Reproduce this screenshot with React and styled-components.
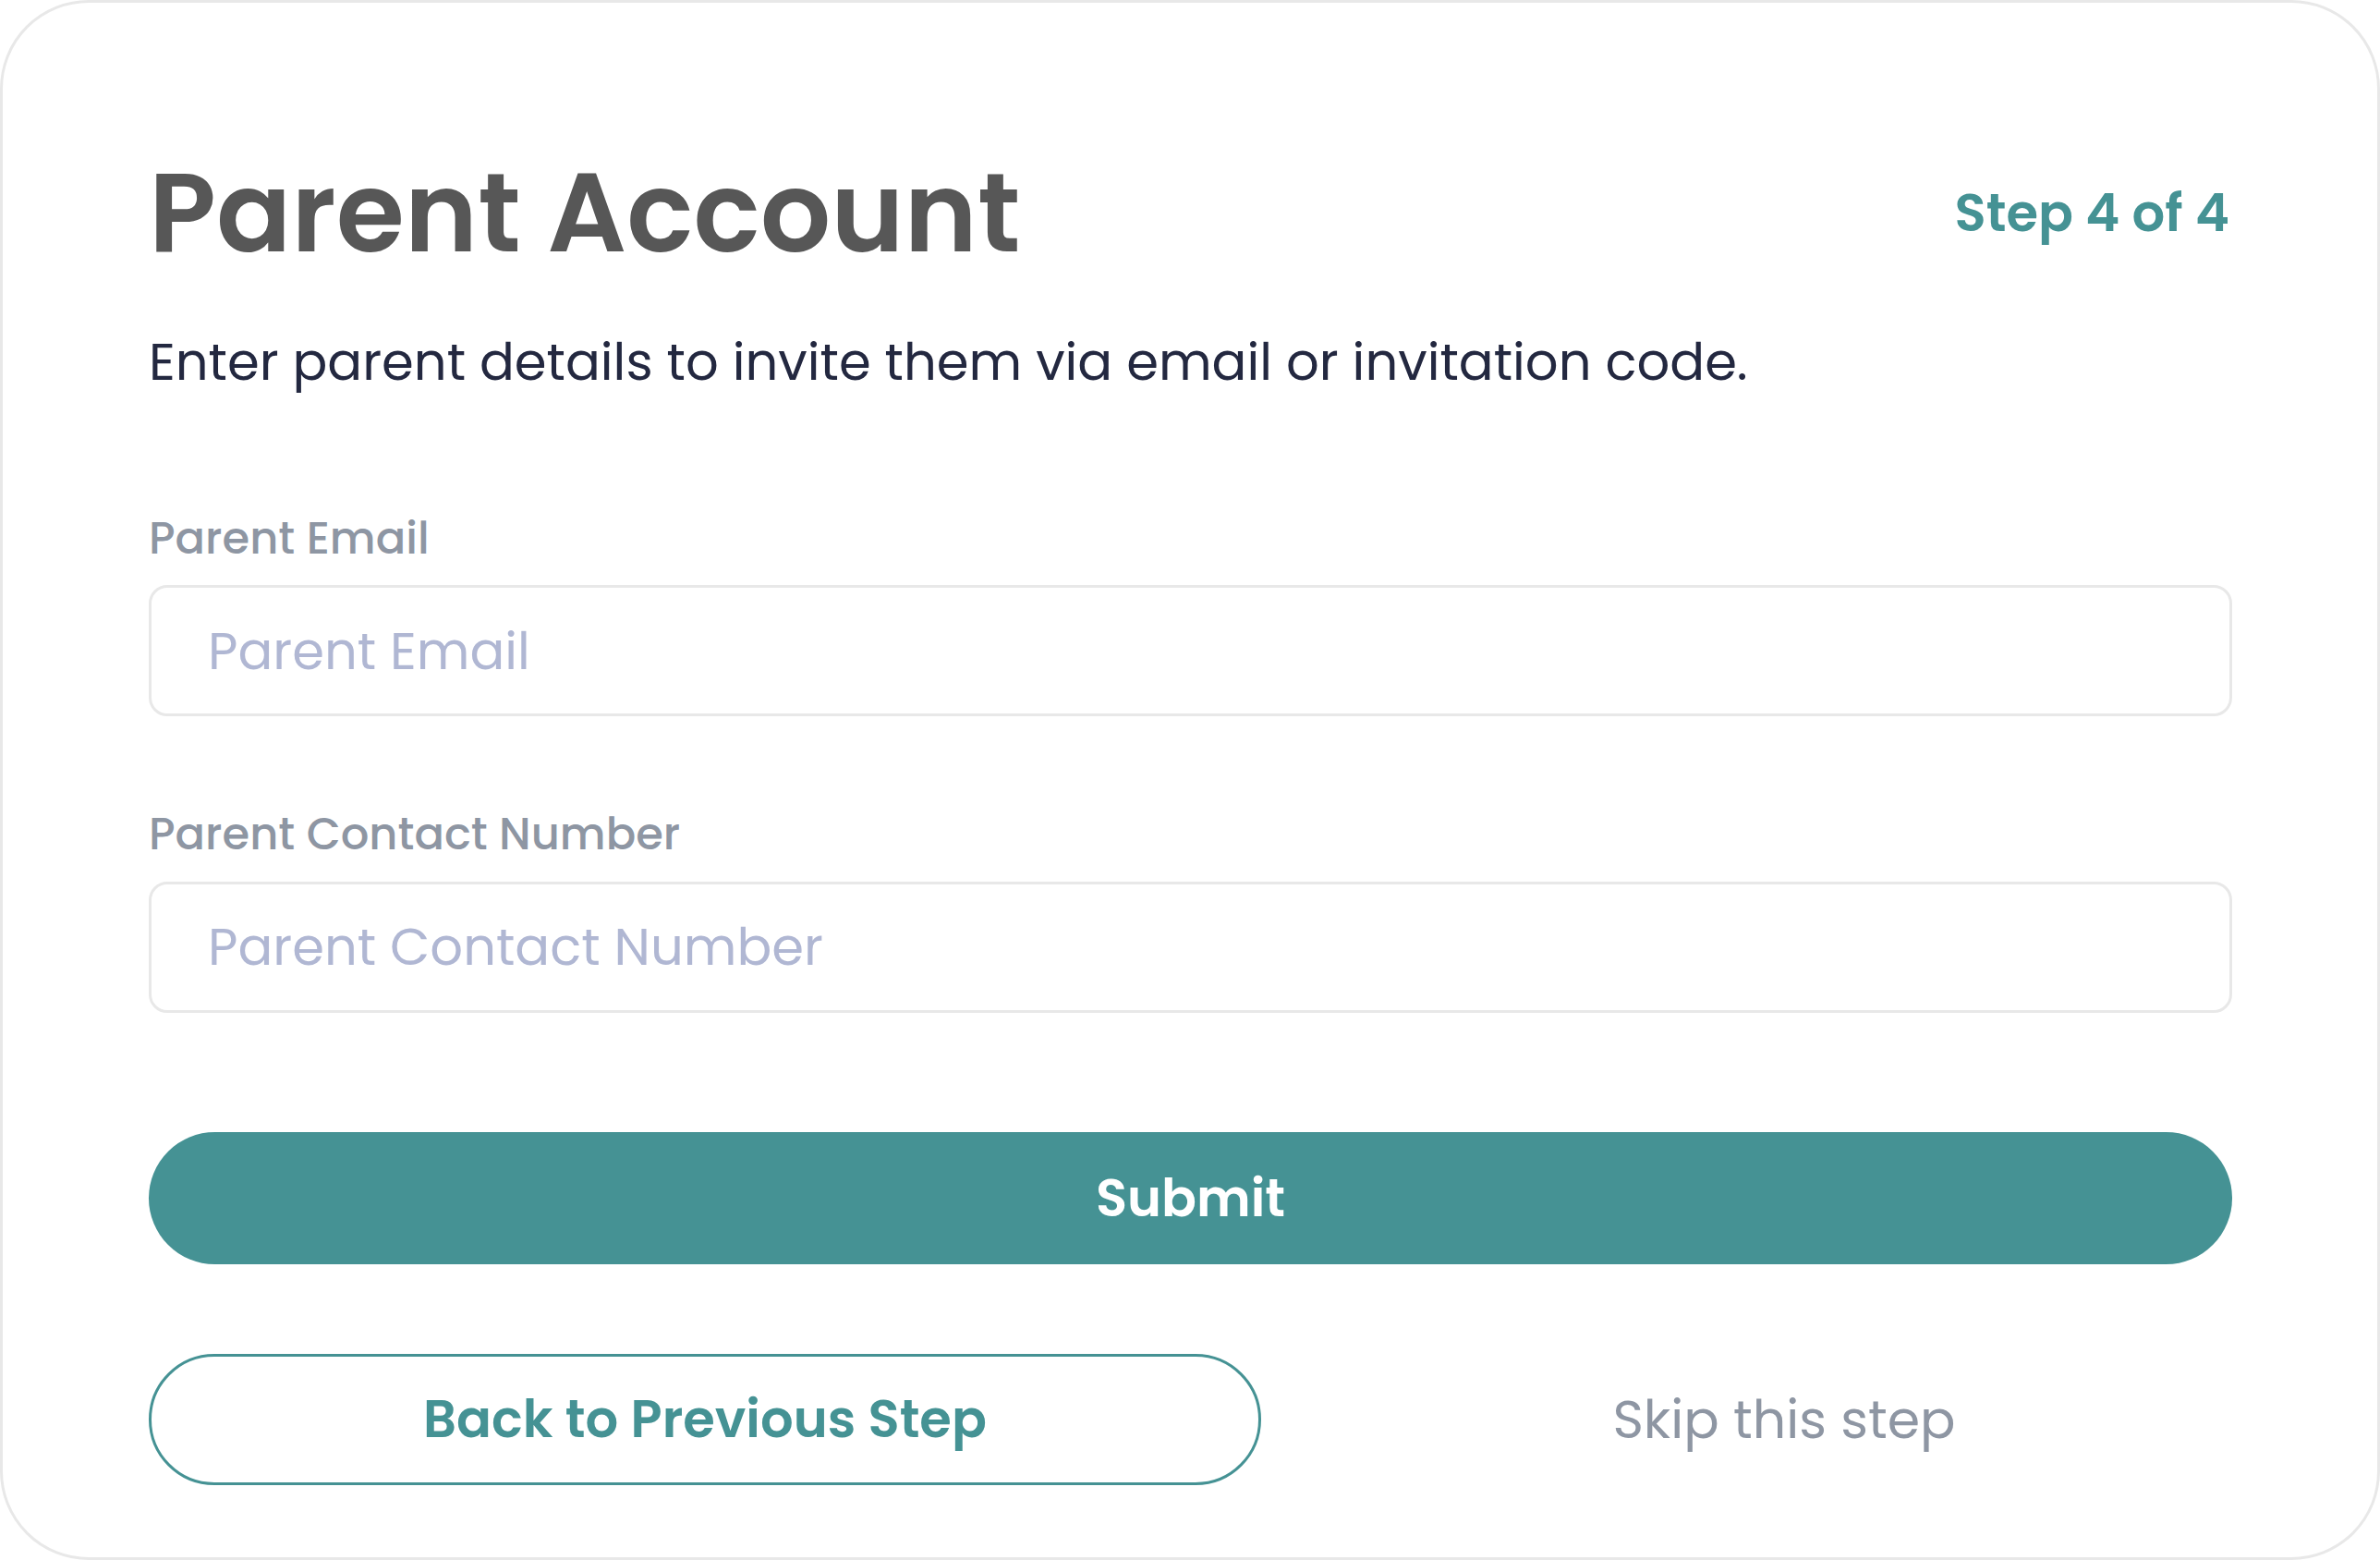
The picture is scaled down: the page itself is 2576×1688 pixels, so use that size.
import React from 'react';
import styled, { createGlobalStyle } from 'styled-components';

const GlobalStyle = createGlobalStyle`
  * {
    box-sizing: border-box;
  }

  body {
    margin: 0;
    background: #ffffff;
    font-family: 'Poppins', 'Inter', 'Noto Sans', sans-serif;
  }
`;

const teal = '#459294';

const Card = styled.div`
  width: 100vw;
  height: 100vh;
  border: 3px solid #e8e8e8;
  border-radius: 96px;
  background: #ffffff;
  padding: 155px 157px 0 158px;
  display: flex;
  flex-direction: column;
`;

const Header = styled.div`
  display: flex;
  align-items: center;
  justify-content: space-between;
`;

const Title = styled.h1`
  margin: 0;
  font-size: 120px;
  line-height: 1.2;
  font-weight: 600;
  color: #575757;
`;

const StepText = styled.span`
  font-size: 56px;
  font-weight: 600;
  color: ${teal};
  padding-right: 3px;
`;

const Subtitle = styled.p`
  margin: 54px 0 0;
  font-size: 56px;
  line-height: 1.3;
  font-weight: 400;
  color: #232840;
`;

const Form = styled.form`
  display: flex;
  flex-direction: column;
  gap: 97px;
  margin-top: 123px;
`;

const Field = styled.label`
  display: flex;
  flex-direction: column;
  gap: 19px;
`;

const Label = styled.span`
  font-size: 48px;
  line-height: 1.3;
  font-weight: 500;
  color: #8e96a3;
`;

const Input = styled.input`
  width: 100%;
  height: 142px;
  border: 3px solid #e8e8e8;
  border-radius: 20px;
  padding: 0 61px;
  font-family: inherit;
  font-size: 56px;
  color: #232840;
  background: #ffffff;
  outline: none;

  &::placeholder {
    color: #b0b7d3;
  }
`;

const SubmitButton = styled.button`
  width: 100%;
  height: 143px;
  margin-top: 129px;
  border: none;
  border-radius: 72px;
  background: ${teal};
  color: #ffffff;
  font-family: inherit;
  font-size: 56px;
  font-weight: 600;
  cursor: pointer;
`;

const Actions = styled.div`
  display: flex;
  align-items: center;
  gap: 81px;
  margin-top: 97px;
`;

const BackButton = styled.button`
  width: 1204px;
  height: 142px;
  border: 3px solid ${teal};
  border-radius: 72px;
  background: #ffffff;
  color: ${teal};
  font-family: inherit;
  font-size: 56px;
  font-weight: 600;
  cursor: pointer;
`;

const SkipButton = styled.button`
  flex: 1;
  border: none;
  background: none;
  color: #8e96a3;
  font-family: inherit;
  font-size: 57px;
  font-weight: 400;
  text-align: center;
  cursor: pointer;
`;

function App() {
  const fields = [
    { label: 'Parent Email', type: 'email' },
    { label: 'Parent Contact Number', type: 'tel' },
  ];

  return (
    <>
      <GlobalStyle />
      <Card>
        <Header>
          <Title>Parent Account</Title>
          <StepText>Step 4 of 4</StepText>
        </Header>
        <Subtitle>Enter parent details to invite them via email or invitation code.</Subtitle>

        <Form onSubmit={(e) => e.preventDefault()}>
          {fields.map((f) => (
            <Field key={f.label}>
              <Label>{f.label}</Label>
              <Input type={f.type} placeholder={f.label} />
            </Field>
          ))}
        </Form>

        <SubmitButton type='button'>Submit</SubmitButton>

        <Actions>
          <BackButton type='button'>Back to Previous Step</BackButton>
          <SkipButton type='button'>Skip this step</SkipButton>
        </Actions>
      </Card>
    </>
  );
}

export default App;
